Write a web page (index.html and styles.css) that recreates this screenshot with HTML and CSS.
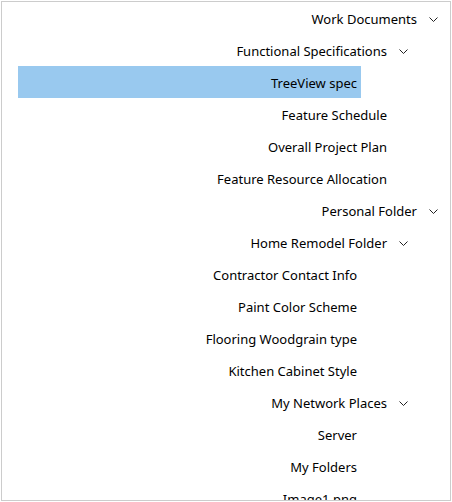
FILE: index.html
```html
<!DOCTYPE html>
<html>
<head>
<meta charset="utf-8">
<link rel="stylesheet" href="styles.css">
</head>
<body>
<div class="tree">
  <div class="node lvl0"><div class="content"><span class="label">Work Documents</span></div><span class="glyph"><svg width="9" height="5" viewBox="0 0 9 5"><path d="M0.5 0.5 L4.5 4.5 L8.5 0.5" /></svg></span></div>
  <div class="node lvl1"><div class="content"><span class="label">Functional Specifications</span></div><span class="glyph"><svg width="9" height="5" viewBox="0 0 9 5"><path d="M0.5 0.5 L4.5 4.5 L8.5 0.5" /></svg></span></div>
  <div class="node lvl2 selected"><div class="content"><span class="label">TreeView spec</span></div><span class="glyph"></span></div>
  <div class="node lvl1"><div class="content"><span class="label">Feature Schedule</span></div><span class="glyph"></span></div>
  <div class="node lvl1"><div class="content"><span class="label">Overall Project Plan</span></div><span class="glyph"></span></div>
  <div class="node lvl1"><div class="content"><span class="label">Feature Resource Allocation</span></div><span class="glyph"></span></div>
  <div class="node lvl0"><div class="content"><span class="label">Personal Folder</span></div><span class="glyph"><svg width="9" height="5" viewBox="0 0 9 5"><path d="M0.5 0.5 L4.5 4.5 L8.5 0.5" /></svg></span></div>
  <div class="node lvl1"><div class="content"><span class="label">Home Remodel Folder</span></div><span class="glyph"><svg width="9" height="5" viewBox="0 0 9 5"><path d="M0.5 0.5 L4.5 4.5 L8.5 0.5" /></svg></span></div>
  <div class="node lvl2"><div class="content"><span class="label">Contractor Contact Info</span></div><span class="glyph"></span></div>
  <div class="node lvl2"><div class="content"><span class="label">Paint Color Scheme</span></div><span class="glyph"></span></div>
  <div class="node lvl2"><div class="content"><span class="label">Flooring Woodgrain type</span></div><span class="glyph"></span></div>
  <div class="node lvl2"><div class="content"><span class="label">Kitchen Cabinet Style</span></div><span class="glyph"></span></div>
  <div class="node lvl1"><div class="content"><span class="label">My Network Places</span></div><span class="glyph"><svg width="9" height="5" viewBox="0 0 9 5"><path d="M0.5 0.5 L4.5 4.5 L8.5 0.5" /></svg></span></div>
  <div class="node lvl2"><div class="content"><span class="label">Server</span></div><span class="glyph"></span></div>
  <div class="node lvl2"><div class="content"><span class="label">My Folders</span></div><span class="glyph"></span></div>
  <div class="node lvl2"><div class="content"><span class="label">Image1.png</span></div><span class="glyph"></span></div>
</div>
</body>
</html>
```

FILE: styles.css
```css
html, body {
  margin: 0;
  padding: 0;
  background: #ffffff;
}

body {
  padding: 1px;
}

.tree {
  width: 450px;
  height: 500px;
  box-sizing: border-box;
  border: 1px solid #cccccc;
  overflow: hidden;
  font-family: "Noto Sans", "Open Sans", sans-serif;
  font-size: 13px;
  color: #000000;
}

.node {
  display: flex;
  height: 32px;
}

.lvl1 {
  padding-right: 30px;
}

.lvl2 {
  padding-right: 60px;
}

.content {
  flex: 1;
  margin-left: 16px;
  padding-right: 4px;
  display: flex;
  justify-content: flex-end;
  align-items: center;
}

.selected .content {
  background: #99c9ef;
}

.label {
  white-space: nowrap;
  line-height: 20px;
  padding-top: 1px;
}

.glyph {
  width: 29px;
  box-sizing: border-box;
  padding-left: 8px;
  padding-top: 2px;
  display: flex;
  align-items: center;
}

.glyph svg {
  display: block;
}

.glyph path {
  fill: none;
  stroke: #222222;
  stroke-width: 1;
}
```
